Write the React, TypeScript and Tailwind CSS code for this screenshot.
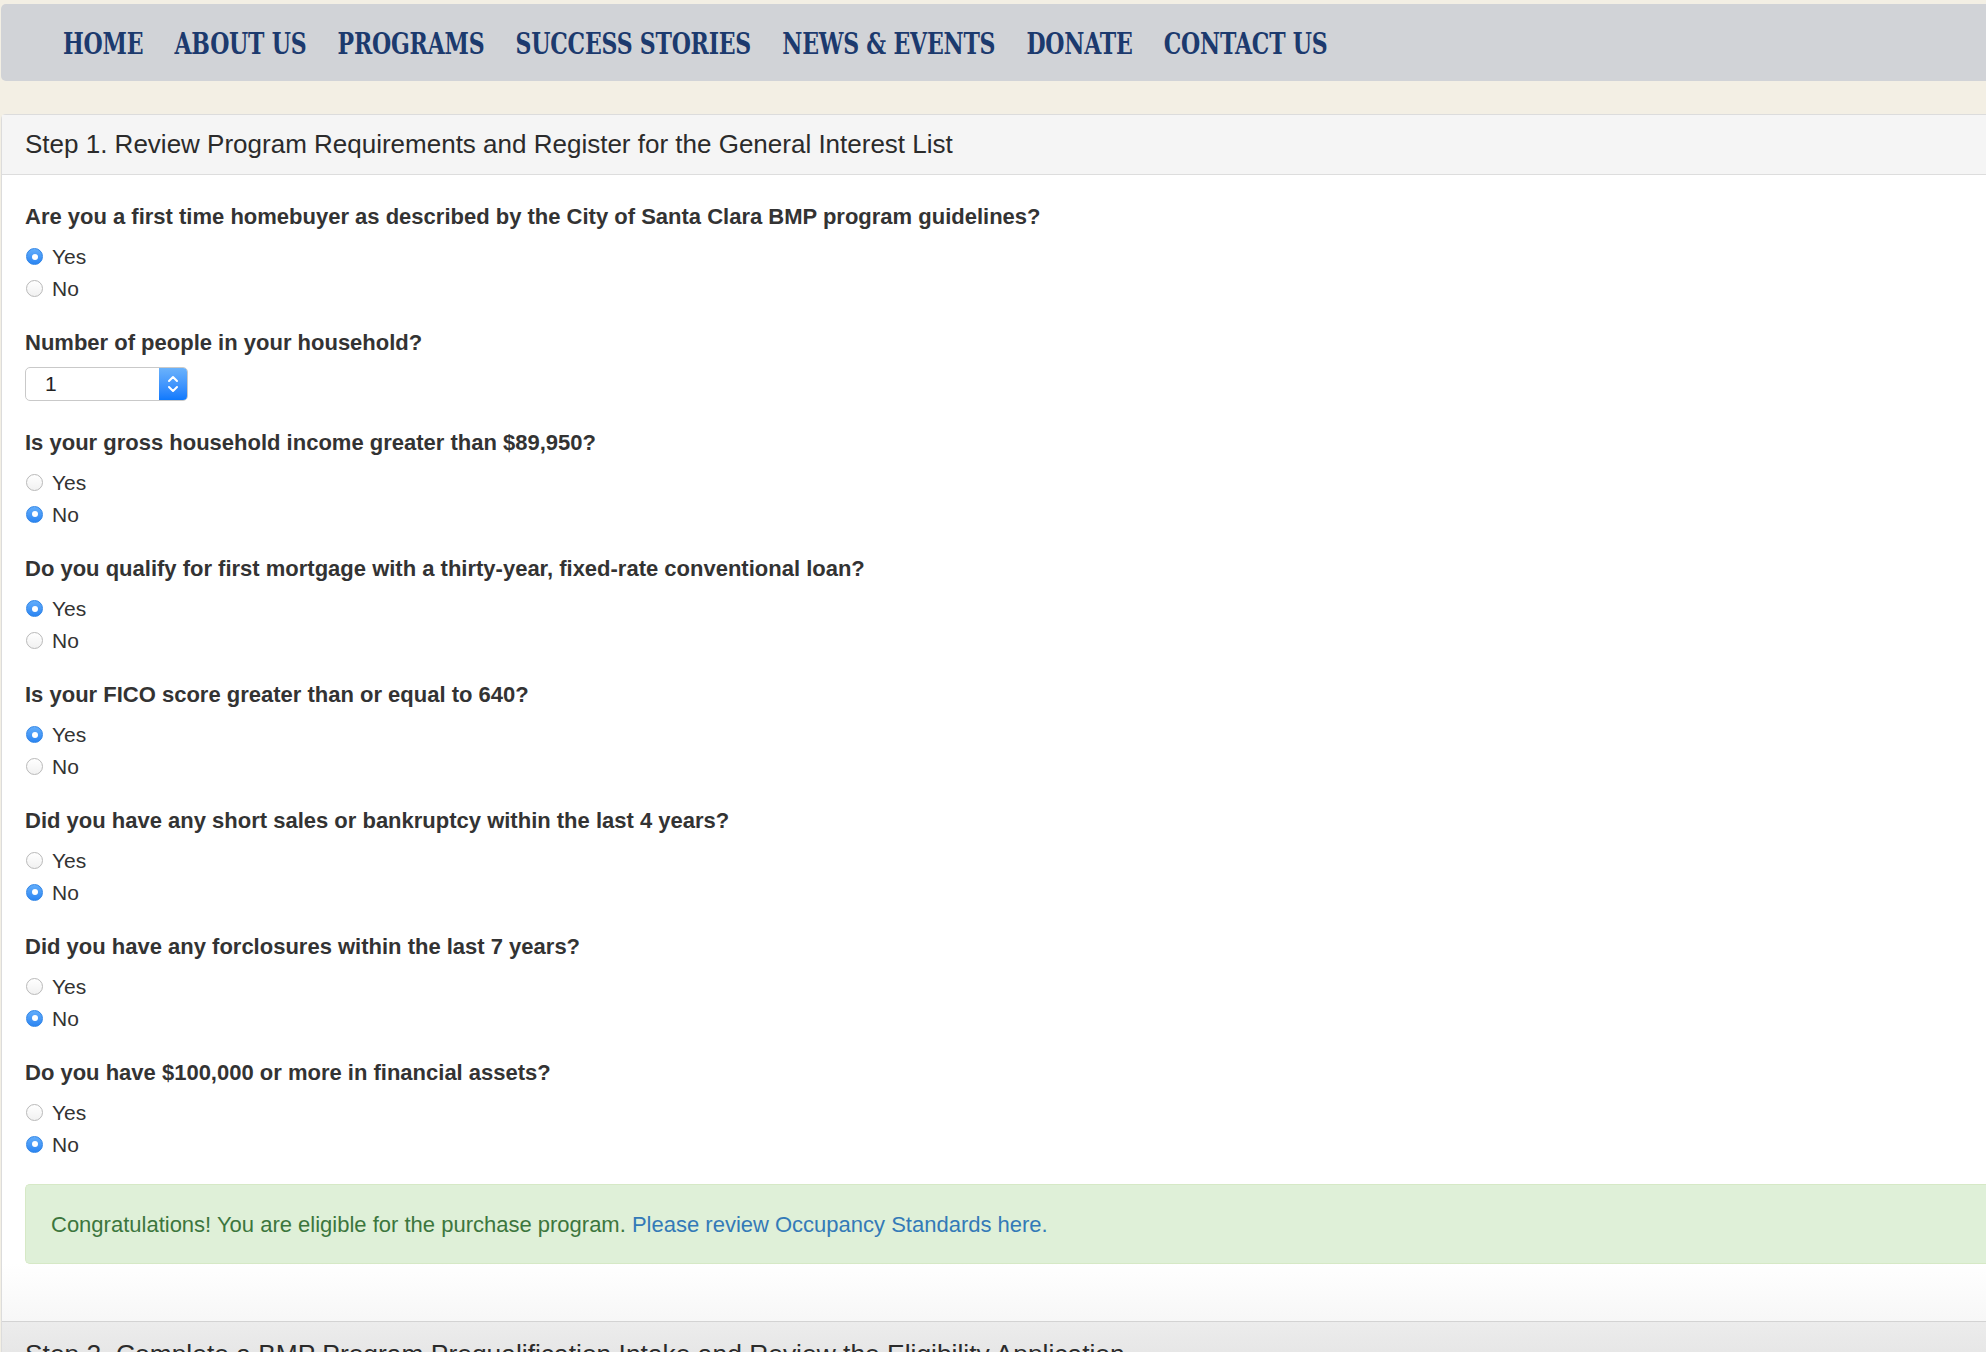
import React from "react";

const sans = { fontFamily: '"Liberation Sans", Arial, sans-serif' };

function Radio({ checked }: { checked: boolean }) {
  if (checked) {
    return (
      <span className="flex h-[17px] w-[17px] shrink-0 items-center justify-center rounded-full border border-[#2f84e6] bg-linear-to-b from-[#62adfb] to-[#2a85f2]">
        <span className="h-[6px] w-[6px] rounded-full bg-white" />
      </span>
    );
  }
  return (
    <span className="h-[17px] w-[17px] shrink-0 rounded-full border border-[#b9b9b9] bg-linear-to-b from-white to-[#f1f1f1]" />
  );
}

function RadioRow({ label, checked }: { label: string; checked: boolean }) {
  return (
    <div className="flex h-[31.5px] items-center gap-[9px] pl-[1px]">
      <Radio checked={checked} />
      <span className="text-[21px] text-[#333]">{label}</span>
    </div>
  );
}

function Question({ q, yes }: { q: string; yes: boolean }) {
  return (
    <div className="mb-[25px]">
      <div className="mb-[10px] text-[22px] font-bold leading-[28px] text-[#333]">{q}</div>
      <RadioRow label="Yes" checked={yes} />
      <RadioRow label="No" checked={!yes} />
    </div>
  );
}

const navItems = [
  "HOME",
  "ABOUT US",
  "PROGRAMS",
  "SUCCESS STORIES",
  "NEWS & EVENTS",
  "DONATE",
  "CONTACT US",
];

export default function App() {
  return (
    <div className="h-[1352px] w-[1986px] overflow-hidden bg-[#f3efe4]" style={sans}>
      <div className="pt-[4px] pl-[1px]">
        <nav className="flex h-[77px] items-center rounded-l-[5px] bg-[#d1d3d7] pt-[4px] pl-[62px]">
          <div className="flex origin-left scale-x-[0.76] items-center gap-[41px]">
            {navItems.map((n) => (
              <a
                key={n}
                className="whitespace-nowrap text-[29px] font-bold tracking-[-0.3px] text-[#1c3a6e]"
                style={{ fontFamily: '"DejaVu Serif", serif' }}
              >
                {n}
              </a>
            ))}
          </div>
        </nav>
      </div>
      <div className="mt-[33px] ml-[1px] rounded-tl-[5px] border-t border-l border-[#dcdcdc] bg-white">
        <div className="flex h-[60px] items-center border-b border-[#dddddd] bg-[#f5f5f5] pl-[23px] text-[26px] text-[#2b2b2b]">
          Step 1. Review Program Requirements and Register for the General Interest List
        </div>
        <div className="pt-[28px] pl-[23px]">
          <Question
            q="Are you a first time homebuyer as described by the City of Santa Clara BMP program guidelines?"
            yes={true}
          />
          <div className="mb-[28px]">
            <div className="mb-[10px] text-[22px] font-bold leading-[28px] text-[#333]">
              Number of people in your household?
            </div>
            <div className="flex h-[34px] w-[163px] overflow-hidden rounded-[5px] border border-[#c9c9c9] bg-white">
              <div className="flex flex-1 items-center pl-[19px] text-[21px] text-[#222]">1</div>
              <div className="flex w-[28px] flex-col items-center justify-center bg-linear-to-b from-[#6ab2fb] to-[#0c79fd]">
                <svg width="14" height="22" viewBox="0 0 14 22" fill="none">
                  <path d="M3 8 L7 4 L11 8" stroke="white" strokeWidth="2" strokeLinecap="round" strokeLinejoin="round" />
                  <path d="M3 14 L7 18 L11 14" stroke="white" strokeWidth="2" strokeLinecap="round" strokeLinejoin="round" />
                </svg>
              </div>
            </div>
          </div>
          <Question q="Is your gross household income greater than $89,950?" yes={false} />
          <Question q="Do you qualify for first mortgage with a thirty-year, fixed-rate conventional loan?" yes={true} />
          <Question q="Is your FICO score greater than or equal to 640?" yes={true} />
          <Question q="Did you have any short sales or bankruptcy within the last 4 years?" yes={false} />
          <Question q="Did you have any forclosures within the last 7 years?" yes={false} />
          <div className="mb-[24px]">
            <div className="mb-[10px] text-[22px] font-bold leading-[28px] text-[#333]">
              Do you have $100,000 or more in financial assets?
            </div>
            <RadioRow label="Yes" checked={false} />
            <RadioRow label="No" checked={true} />
          </div>
          <div className="flex h-[80px] items-center rounded-l-[5px] border-y border-l border-[#d6e9c6] bg-[#dff0d8] pl-[25px] text-[22px] text-[#3c763d]">
            <span>
              Congratulations! You are eligible for the purchase program.{" "}
              <a className="text-[#337ab7]">Please review Occupancy Standards here.</a>
            </span>
          </div>
        </div>
        <div className="h-[57px] bg-linear-to-b from-white to-[#f7f7f7]" />
        <div className="flex h-[60px] items-start border-t border-[#d3d3d3] bg-linear-to-b from-[#ececec] to-[#e2e2e2] pt-[13px] pl-[23px] text-[26.4px] text-[#2b2b2b]">
          Step 2. Complete a BMP Program Prequalification Intake and Review the Eligibility Application
        </div>
      </div>
    </div>
  );
}
